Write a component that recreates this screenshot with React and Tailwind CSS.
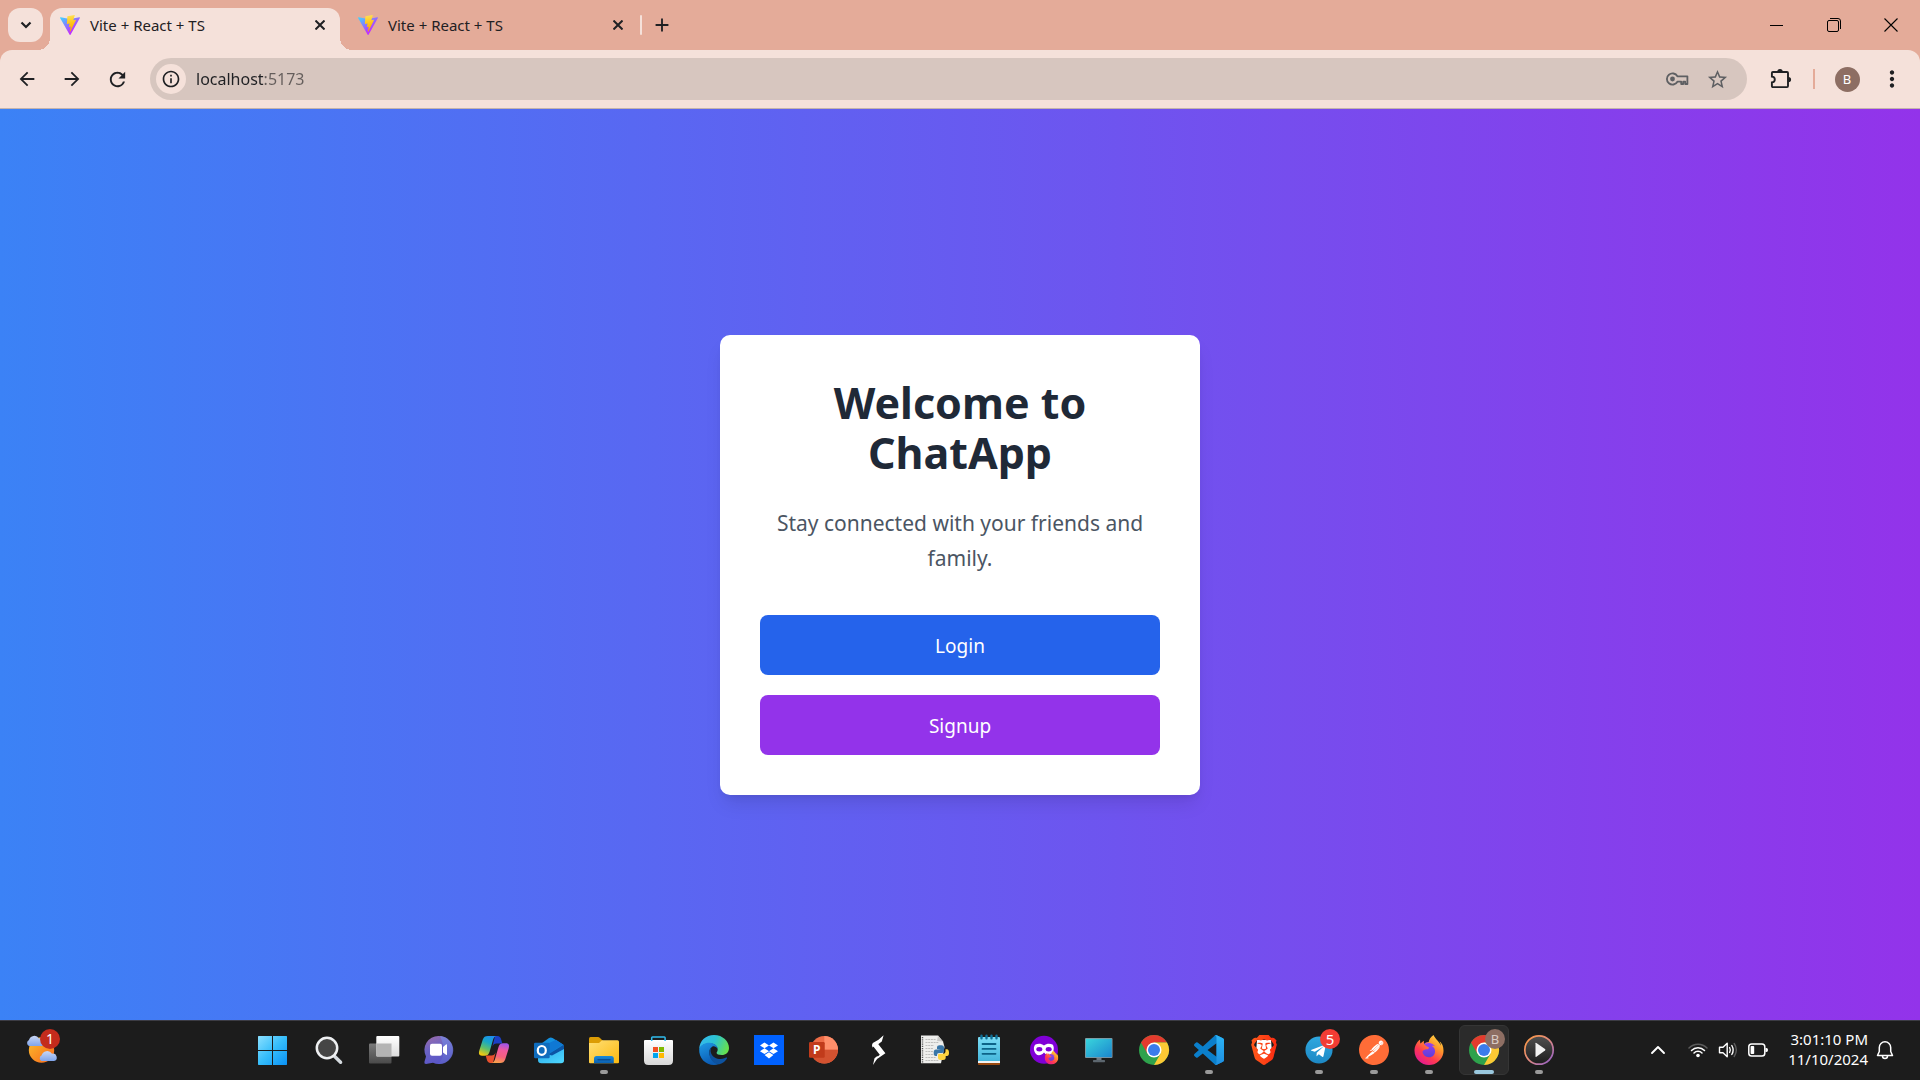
import React from "react";
import { MdArrowBack, MdArrowForward, MdRefresh, MdStarBorder, MdInfoOutline, MdAdd, MdMoreVert } from "react-icons/md";
import { SiBrave, SiPostman, SiFirefoxbrowser } from "react-icons/si";
import { FaTelegram } from "react-icons/fa";

/* ---------- shared gradients ---------- */

function Gradient({ id, stops, x1 = 0, y1 = 0, x2 = 1, y2 = 1 }) {
  return (
    <linearGradient id={id} x1={x1} y1={y1} x2={x2} y2={y2}>
      {stops.map((c, i) => (
        <stop key={i} offset={i / (stops.length - 1)} stopColor={c} />
      ))}
    </linearGradient>
  );
}

function Defs() {
  return (
    <svg width="0" height="0" className="absolute" aria-hidden="true">
      <defs>
        <Gradient id="vite-a" stops={["#41d1ff", "#bd34fe"]} x1={-0.008} y1={0.077} x2={0.576} y2={0.784} />
        <Gradient id="vite-b" stops={["#ffe052", "#ffc61a", "#ffa800"]} x1={0.43} y1={0.02} x2={0.5} y2={0.89} />
        <Gradient id="win" stops={["#8be0ff", "#35bdfb", "#0a91f5"]} />
        <Gradient id="sun" stops={["#fbc02d", "#f8661b"]} />
        <Gradient id="cloud" stops={["#c8d6f5", "#7fa4ea"]} x2={0} />
        <Gradient id="tv-w" stops={["#ffffff", "#dcdcdc"]} x2={0} />
        <Gradient id="tv-g" stops={["#7b7b7b", "#4a4a4a"]} x2={0} />
        <Gradient id="chat" stops={["#a06da8", "#6a62c4", "#5a56c8"]} x2={0.4} />
        <Gradient id="chat2" stops={["#7b88e0", "#5b5fc7"]} x2={0} />
        <Gradient id="cop-a" stops={["#1f8df0", "#16a7c9", "#5fc06a", "#f2c811"]} x1={0.7} x2={0.3} />
        <Gradient id="cop-b" stops={["#f9a14a", "#f4607f", "#f0599c", "#a055e8"]} x1={0.4} y1={1} x2={0.6} y2={0} />
        <Gradient id="folder" stops={["#ffdf75", "#fbb910"]} />
        <Gradient id="clip" stops={["#1a8ad8", "#0a5fb0"]} x2={0} />
        <Gradient id="store" stops={["#ffffff", "#d8d8d8"]} x2={0} />
        <Gradient id="edge-a" stops={["#35b8f0", "#2cc3d2", "#66e04f"]} y1={0.2} y2={0.5} />
        <Gradient id="edge-b" stops={["#1f9be6", "#0b5cb4"]} x2={0.4} />
        <Gradient id="note" stops={["#7bdcf5", "#45b7dc"]} x2={0} />
        <Gradient id="fox" stops={["#ffe14a", "#ff9a2a", "#ff3a50", "#e0159b"]} x1={0.9} y1={0} x2={0.2} y2={1} />
        <Gradient id="foxcore" stops={["#9b3ff0", "#5a3fd8"]} x2={0} />
        <Gradient id="screen" stops={["#39d5dc", "#1b86cf"]} />
        <Gradient id="tele" stops={["#2fa8e0", "#1d88c4"]} x2={0} />
        <Gradient id="brave" stops={["#ff5a1a", "#fb2b12"]} x2={1} y2={0} />
        <Gradient id="media-ring" stops={["#ff9a3d", "#e08a80", "#8a5bd0"]} />
        <Gradient id="media-in" stops={["#505050", "#1c1c1c"]} x2={0} />
        <Gradient id="ol" stops={["#28a8ea", "#50d9ff"]} />
        <Gradient id="vs" stops={["#2bb4f6", "#1f8fe0"]} x2={0} />
      </defs>
    </svg>
  );
}

/* ---------- browser glyphs ---------- */

function ViteLogo() {
  return (
    <svg width="20" height="20" viewBox="0 0 256 257" className="shrink-0" aria-hidden="true">
      <path fill="url(#vite-a)" d="M255.153 37.938L134.897 252.976c-2.483 4.44-8.862 4.466-11.382.048L.875 37.958c-2.746-4.814 1.371-10.646 6.827-9.67l120.385 21.517a6.537 6.537 0 0 0 2.322-.004l117.867-21.483c5.438-.991 9.574 4.796 6.877 9.62Z" />
      <path fill="url(#vite-b)" d="M185.432.063L96.44 17.501a3.268 3.268 0 0 0-2.634 3.014l-5.474 92.456a3.268 3.268 0 0 0 3.997 3.378l24.777-5.718c2.318-.535 4.413 1.507 3.936 3.838l-7.361 36.047c-.495 2.426 1.782 4.5 4.151 3.78l15.304-4.649c2.372-.72 4.652 1.36 4.15 3.788l-11.698 56.621c-.732 3.542 3.979 5.473 5.943 2.437l1.313-2.028l72.516-144.72c1.215-2.423-.88-5.186-3.54-4.672l-25.505 4.922c-2.396.462-4.435-1.77-3.759-4.114l16.646-57.705c.677-2.35-1.37-4.583-3.769-4.113Z" />
    </svg>
  );
}

function CrossIcon() {
  return (
    <svg width="10" height="10" viewBox="0 0 10 10" fill="none" stroke="currentColor" strokeWidth="2" aria-hidden="true">
      <path d="M.5 .5 L9.5 9.5 M9.5 .5 L.5 9.5" />
    </svg>
  );
}

function ChevronDownIcon() {
  return (
    <svg width="12" height="8" viewBox="0 0 12 8" fill="none" stroke="currentColor" strokeWidth="2.2" aria-hidden="true">
      <path d="M1.5 1.5 L6 6 L10.500 1.5" />
    </svg>
  );
}

function KeyIcon() {
  return (
    <svg width="24" height="16" viewBox="0 0 24 16" fill="none" stroke="#5e5f62" strokeWidth="1.8" aria-hidden="true">
      <path d="M12.4 5.3 A5.6 5.6 0 1 0 12.4 10.7 H16.2 V13 H18.2 V10.6 H20.2 V13 H22.4 V5.3 Z" strokeLinejoin="round" />
      <circle cx="7.5" cy="8" r="2.4" fill="#5e5f62" stroke="none" />
    </svg>
  );
}

function PuzzleIcon() {
  return (
    <svg width="22" height="22" viewBox="0 0 22 22" aria-hidden="true">
      <path d="M2.9 4 H17 Q18 4 18 5 V18.1 Q18 19.1 17 19.1 H2.9 Q1.9 19.1 1.9 18.1 V14.4 Q4.8 14.2 4.8 11.5 Q4.8 8.8 1.9 8.6 V5 Q1.9 4 2.9 4 Z" fill="none" stroke="#1f2023" strokeWidth="1.9" />
      <path d="M7.3 3.6 a2.7 2.7 0 0 1 5.4 0 Z M18.4 8.9 a2.7 2.7 0 0 1 0 5.4 Z" fill="#1f2023" />
    </svg>
  );
}

/* ---------- taskbar glyphs, all on a 30 × 30 grid ---------- */

function Glyph({ children }) {
  return (
    <svg width="30" height="30" viewBox="0 0 30 30" className="overflow-visible" aria-hidden="true">
      {children}
    </svg>
  );
}

const Windows = () => (
  <Glyph>
    <path fill="url(#win)" d="M-0.5 1H13V15H-1V1.5ZM14 1H27.500L28 1.500V15H14ZM-1 16H13V30H-0.500L-1 29.500ZM14 16H28V29.500L27.500 30H14Z" />
  </Glyph>
);

const Search = () => (
  <Glyph>
    <path d="M20.500 21.200 L26.600 27.300" stroke="#d5dadf" strokeWidth="3.400" strokeLinecap="round" />
    <circle cx="13" cy="13" r="10.200" fill="#454545" stroke="#eef0f2" strokeWidth="2.500" />
  </Glyph>
);

const TaskView = () => (
  <Glyph>
    <rect x="0" y="8.500" width="22.500" height="20" rx="1" fill="url(#tv-g)" />
    <rect x="7.300" y="1" width="23" height="20.500" rx="1" fill="url(#tv-w)" />
    <path d="M7.300 8.500 H22.500 V21.500 H8.300 Q7.300 21.500 7.300 20.500 Z" fill="#b4b4b4" />
  </Glyph>
);

const Chat = () => (
  <Glyph>
    <path d="M14.500 1 A14 14 0 1 1 9 27.800 L2 29 Q0 29 .4 27 L2 21.500 A14 14 0 0 1 14.500 1Z" fill="url(#chat)" />
    <path d="M16 1 A14 14 0 0 1 14.500 29 Q24 18 16 1Z" fill="url(#chat2)" opacity=".8" />
    <rect x="6" y="8.700" width="12" height="12" rx="2" fill="#fff" />
    <path d="M19 12 L22 9.500 Q23 9 23 10.200 V19.200 Q23 20.400 22 19.800 L19 17.500Z" fill="#fff" />
  </Glyph>
);

const Copilot = () => (
  <Glyph>
    <path d="M16 1 H18.500 C20.500 1 21.600 2.500 22.200 4.500 L23.300 8.500 H17.500 C15.500 8.500 14 9.500 13.300 12 Z" fill="#1b3fc4" />
    <path d="M9 1 H18 C15.500 1 14.500 3 13.800 5.500 L10.500 17 C9.500 20 8 20.700 6 20.700 H3 C0 20.700 -.5 18.500 .3 15.500 L3.800 4.500 C4.700 2 6 1 9 1Z" fill="url(#cop-a)" />
    <g transform="rotate(180 15 14.500)">
      <path d="M16 1 H18.500 C20.500 1 21.600 2.500 22.200 4.500 L23.300 8.500 H17.500 C15.500 8.500 14 9.500 13.300 12 Z" fill="#e8502e" />
    </g>
    <path d="M21 28 H12 C14.500 28 15.500 26 16.200 23.500 L19.500 12 C20.500 9 22 8.300 24 8.300 H27 C30 8.300 30.500 10.500 29.700 13.500 L26.200 24.500 C25.300 27 24 28 21 28Z" fill="url(#cop-b)" />
  </Glyph>
);

const Outlook = () => (
  <Glyph>
    <path d="M4 11 L15 3 Q16.800 1.800 18.600 3 L29 9.500 Q30 10.200 30 11.500 V20 H4Z" fill="#1490df" />
    <path d="M13 9 L22 4.800 L29 9.500 L13 20Z" fill="#0f78d4" />
    <path d="M13 21 L30 10.500 V20 L13 27Z" fill="#0a4fa0" />
    <path d="M4 14 L17 20 L30 13.500 V25.500 Q30 28.300 27 28.300 H7.500 Q4 28.300 4 25Z" fill="url(#ol)" />
    <path d="M14 19.500 L30 9.500 V14 L18 20.500Z" fill="#0c55a5" />
    <rect x="0" y="7.700" width="15.700" height="15.500" rx="1.200" fill="#0f6cbd" />
    <ellipse cx="7.800" cy="15.400" rx="4" ry="4.400" fill="none" stroke="#fff" strokeWidth="2.200" />
  </Glyph>
);

const Explorer = () => (
  <Glyph>
    <path d="M0 3.500 Q0 2 1.500 2 H9 Q10 2 11 3 L13.500 5.500 V10 H0Z" fill="#dc9c05" />
    <path d="M0 8 H10 L13 5.300 H28.500 Q30 5.300 30 6.800 V27.200 Q30 28.300 28.900 28.300 H1.100 Q0 28.300 0 27.200Z" fill="url(#folder)" />
    <path d="M5 28.300 V23.500 Q5 21 7.500 21 H22.300 Q24.800 21 24.800 23.500 V28.300Z" fill="url(#clip)" />
    <path d="M9 24.700 H21" stroke="#0a4f96" strokeWidth="1.400" strokeLinecap="round" />
  </Glyph>
);

const Store = () => (
  <Glyph>
    <path d="M7.700 6 V2.800 Q7.700 2 8.500 2 H20.300 Q21.100 2 21.100 2.800 V6" fill="none" stroke="#30bdee" strokeWidth="1.500" />
    <path d="M1 5 H28 Q29 5 29 6 V25.500 Q29 30 24.500 30 H4.500 Q0 30 0 25.500 V6 Q0 5 1 5Z" fill="url(#store)" />
    <path d="M7.700 5 V6 M21.100 5 V6" stroke="#30bdee" strokeWidth="1.500" />
    <rect x="9" y="12" width="5" height="5" fill="#f25022" />
    <rect x="15" y="12" width="5" height="5" fill="#7fba00" />
    <rect x="9" y="18" width="5" height="5" fill="#00a4ef" />
    <rect x="15" y="18" width="5" height="5" fill="#ffb900" />
  </Glyph>
);

const Edge = () => (
  <Glyph>
    <path d="M.2 14 C.5 5.500 7 0 15 0 C24 0 30 6.500 30 13 C30 17.500 26.700 20 22.800 20 C19.500 20 17.600 19 17.600 18 C17.600 17 18.700 16.600 18.700 14.500 C18.700 11 15 8.200 10.500 8.200 C6 8.200 2 10.500 .2 14Z" fill="url(#edge-a)" />
    <path d="M.2 14 C1.500 10 6 7.600 10.500 7.800 C15 8 18.600 10.500 18.700 14 C17.500 12 15.500 11 13.500 11.500 C10.500 13 9.500 17 11 21 C12.500 25.500 16.500 28.500 20 29 C18.500 29.700 16.800 30 15 30 C6.500 30 -.4 23 .2 14Z" fill="url(#edge-b)" />
    <path d="M13.500 11.500 C11.500 13 11.200 15.500 12 18 C13.500 22 17.500 24 21.500 24 C24.500 24 26.500 22.800 27.300 22.500 C28 22.300 28.300 22.800 28 23.400 C26.500 26 24 28.200 20.500 29.200 C16 29.500 12.500 26 11 22 C9.500 17.500 10.500 13 13.500 11.500Z" fill="#0d529f" />
  </Glyph>
);

const Dropbox = () => (
  <Glyph>
    <rect width="30" height="30" fill="#0061ff" />
    <path fill="#fff" d="M10.500 7.500 L15 10.400 L10.500 13.300 L6 10.400ZM19.500 7.500 L24 10.400 L19.500 13.300 L15 10.400ZM10.500 13.300 L15 16.200 L10.500 19.100 L6 16.200ZM19.500 13.300 L24 16.200 L19.500 19.100 L15 16.200ZM10.600 20.100 L15 17.200 L19.400 20.100 L15 23.500Z" />
  </Glyph>
);

const PowerPoint = () => (
  <Glyph>
    <circle cx="15.300" cy="14.700" r="13.700" fill="#ed6c47" />
    <path d="M15.300 1 A13.700 13.700 0 0 1 29 14.700 H15.300Z" fill="#ff8f6b" />
    <path d="M1.600 14.700 H29 A13.700 13.700 0 0 1 1.600 14.700Z" fill="#d35230" />
    <rect x="0" y="7" width="15.700" height="15.700" rx="1.200" fill="#c13b1b" />
    <text x="7.700" y="19" textAnchor="middle" fontSize="12" fontWeight="700" fill="#fff">P</text>
  </Glyph>
);

const Bolt = () => (
  <Glyph>
    <path fill="#fff" d="M19.600 .3 L17.800 6.500 L13.500 9.800 L12.500 9 L8.500 12.500 Q7.300 9.500 8.800 8 L14.500 4.800Z" />
    <path fill="#fff" d="M8.600 10.500 L13 7.500 L21.400 18.300 L13.800 23.600 L13 22.300 L15.800 19.800Z" />
    <path fill="#fff" d="M9 30 L10.500 23.300 L13.300 21 L14.500 22.500 L12.300 25Z" />
  </Glyph>
);

const PythonFile = () => (
  <Glyph>
    <path d="M2 .5 H19 L24 6.500 L25.500 12 L22 28.300 H2Z" fill="#eeeeec" />
    <path d="M19 .5 L24 6.500 L18 6Z" fill="#c9c9c7" />
    <path d="M3.500 2 V27.500" stroke="#555" strokeWidth="1.400" strokeDasharray="1.200 1" />
    <path d="M6.500 4.500H17M6.500 7.500H20M6.500 10.500H15M6.500 13.500H14M6.500 16.500H14M6.500 19.500H16M6.500 22.500H17M6.500 25.500H20" stroke="#bdbdbb" strokeWidth="1" strokeDasharray="2 .7" />
    <path d="M18 14 V12 Q18 10.300 20.500 10.300 H22.500 Q25 10.300 25 12.500 V16 Q25 18 23 18 H20 Q18 18 18 20 V21 H16.500 Q14.700 21 14.700 17.500 Q14.700 14.500 17 14.500 H22" fill="#3a77a8" />
    <path d="M26.500 14.200 H28 Q30 14.200 30 18 Q30 21 28 21 H22.500 H26.700 V23 Q26.700 25 24 25 H21.500 Q19 25 19 23 V20 Q19 18.800 20.500 18.800 H24 Q26.500 18.800 26.500 16.500Z" fill="#ffd540" />
  </Glyph>
);

const Notepad = () => (
  <Glyph>
    <rect x="4" y="24" width="22" height="6" rx=".8" fill="#99490f" />
    <rect x="4" y="23" width="22" height="5" fill="#f2f2f2" />
    <path d="M5 2 H25 Q26 2 26 3 V26 H4 V3 Q4 2 5 2Z" fill="url(#note)" />
    <path d="M8.500 9H21.500M8.500 13.900H21.500M8.500 18.800H21.500" stroke="#0d6388" strokeWidth="1.800" strokeLinecap="round" />
    <path d="M7.500 .8V3.200M12.500 .8V3.200M17.500 .8V3.200M22.500 .8V3.200" stroke="#0f6f96" strokeWidth="2.400" strokeLinecap="round" />
  </Glyph>
);

const PrivateFox = () => (
  <Glyph>
    <circle cx="15" cy="14.800" r="14" fill="#8000d7" />
    <path d="M15 10.500 C17.500 8.300 21 8.300 23.500 9.500 C25.500 11.500 25 16 23 19 C21 21 17.500 20.500 15 17.500 C12.500 20.500 9 21 7 19 C4.500 16 4.200 11.500 6.500 9.500 C9 8.300 12.500 8.300 15 10.500Z" fill="#fff" />
    <ellipse cx="10.300" cy="14.200" rx="3" ry="2.200" fill="#8000d7" />
    <ellipse cx="19.700" cy="14.200" rx="3" ry="2.200" fill="#8000d7" />
    <circle cx="22.700" cy="22.700" r="4" fill="url(#foxcore)" />
    <SiFirefoxbrowser x="15.500" y="15.500" size={14} fill="url(#fox)" />
  </Glyph>
);

const Monitor = () => (
  <Glyph>
    <path d="M12.500 22 H17.500 V26 H12.500Z" fill="#6f7a83" />
    <rect x="9" y="25" width="12" height="2.200" rx=".6" fill="#5c666e" />
    <rect x="1" y="3" width="27.500" height="20" rx="1" fill="#8a949b" />
    <rect x="1.800" y="3.800" width="26" height="18.400" fill="url(#screen)" />
  </Glyph>
);

const Chrome = () => (
  <Glyph>
    <circle cx="15" cy="15" r="15" fill="#2ea24c" />
    <path d="M2 7.500 A15 15 0 0 1 28 7.500 H15 L8.500 18.750Z" fill="#e33b2e" />
    <path d="M28 7.500 A15 15 0 0 1 15 30 L21.500 18.750 L15 7.500Z" fill="#fcc934" />
    <circle cx="15" cy="15" r="7.500" fill="#fff" />
    <circle cx="15" cy="15" r="6" fill="#3a7cec" />
  </Glyph>
);

const VsCode = () => (
  <Glyph>
    <g transform="scale(1.250)">
      <path d="M23.150 2.587L18.210.210a1.494 1.494 0 0 0-1.705.290l-9.460 8.630-4.120-3.128a.999.999 0 0 0-1.276.057L.327 7.261A1 1 0 0 0 .326 8.740L3.899 12 .326 15.260a1 1 0 0 0 .001 1.479L1.650 17.940a.999.999 0 0 0 1.276.057l4.120-3.128 9.460 8.630a1.492 1.492 0 0 0 1.704.290l4.942-2.377A1.500 1.500 0 0 0 24 20.060V3.939a1.500 1.500 0 0 0-.850-1.352zm-5.146 14.861L10.826 12l7.178-5.448v10.896z" fill="#0b7fcb" />
      <path d="M18.200.200 L23.150 2.587 Q24 3 24 3.940 V20.060 Q24 21 23.150 21.410 L18.200 23.790 Q17.300 24.100 16.500 23.500 Q18 23.700 18 22 V2 Q18 .300 16.500 .500 Q17.300 -.100 18.200 .200Z" fill="url(#vs)" />
    </g>
  </Glyph>
);

const Brave = () => (
  <Glyph>
    <path d="M8 5 H22 L23 18 L15 27 L7 18Z" fill="#fff" />
    <SiBrave x="0" y="0" size={30} fill="url(#brave)" />
  </Glyph>
);

const Telegram = () => (
  <Glyph>
    <circle cx="14.800" cy="14.800" r="12" fill="#fff" />
    <FaTelegram x="1" y="1" size={28} fill="url(#tele)" />
  </Glyph>
);

const Postman = () => (
  <Glyph>
    <circle cx="15" cy="15" r="14" fill="#fff" />
    <SiPostman x="0" y="0" size={30} fill="#ff6c37" />
  </Glyph>
);

const Firefox = () => (
  <Glyph>
    <circle cx="15" cy="15" r="8" fill="url(#foxcore)" />
    <SiFirefoxbrowser x="0" y="0" size={30} fill="url(#fox)" />
  </Glyph>
);

const Media = () => (
  <Glyph>
    <circle cx="15" cy="15" r="14.200" fill="url(#media-in)" stroke="url(#media-ring)" strokeWidth="1.700" />
    <path d="M11.500 8.300 Q11.500 7.300 12.400 7.900 L21 14 Q21.900 14.800 21 15.600 L12.400 21.700 Q11.500 22.200 11.500 21.300Z" fill="#f1f1f1" />
  </Glyph>
);

const Weather = () => (
  <svg width="32" height="32" viewBox="0 0 32 32" className="overflow-visible" aria-hidden="true">
    <circle cx="15.500" cy="16" r="12.700" fill="url(#sun)" />
    <path d="M3 12 A3.300 3.300 0 0 1 3 6 A5.500 5.500 0 0 1 13 4.500 A4 4 0 0 1 16 12Z" fill="url(#cloud)" />
    <path d="M15.500 27 A3 3 0 0 1 15.500 21.500 A5.800 5.800 0 0 1 26 19.800 A3.700 3.700 0 0 1 28 27Z" fill="url(#cloud)" />
  </svg>
);

/* ---------- taskbar ---------- */

const apps = [
  { name: "Start", Icon: Windows },
  { name: "Search", Icon: Search },
  { name: "Task view", Icon: TaskView },
  { name: "Chat", Icon: Chat },
  { name: "Copilot", Icon: Copilot },
  { name: "Outlook", Icon: Outlook },
  { name: "File Explorer", Icon: Explorer, open: true },
  { name: "Microsoft Store", Icon: Store },
  { name: "Edge", Icon: Edge },
  { name: "Dropbox", Icon: Dropbox },
  { name: "PowerPoint", Icon: PowerPoint },
  { name: "Launcher", Icon: Bolt },
  { name: "Python", Icon: PythonFile },
  { name: "Notepad", Icon: Notepad },
  { name: "Private browsing", Icon: PrivateFox },
  { name: "Remote desktop", Icon: Monitor },
  { name: "Chrome", Icon: Chrome },
  { name: "Visual Studio Code", Icon: VsCode, open: true },
  { name: "Brave", Icon: Brave },
  { name: "Telegram", Icon: Telegram, open: true, badge: "5", badgeClass: "bg-[#f23c34] text-[15px] text-white" },
  { name: "Postman", Icon: Postman, open: true },
  { name: "Firefox", Icon: Firefox, open: true },
  { name: "Chrome profile", Icon: Chrome, active: true, badge: "B", badgeClass: "bg-[#8d6e63] text-[13px] text-[#d9cbc6]" },
  { name: "Media Player", Icon: Media, open: true },
];

function TaskbarApp({ app }) {
  const { name, Icon, open, active, badge, badgeClass } = app;
  return (
    <li className="flex w-[54px] justify-center">
      <button
        type="button"
        aria-label={name}
        className={
          "relative flex h-[50px] w-[50px] items-center justify-center rounded-md border " +
          (active ? "border-[#353535] bg-[#2b2b2b]" : "border-transparent")
        }
      >
        <Icon />
        {badge && (
          <span className={"absolute top-[3px] right-[3px] flex size-5 items-center justify-center rounded-full leading-none " + badgeClass}>
            {badge}
          </span>
        )}
        {open && <span className="absolute bottom-0 h-1 w-2 rounded-full bg-[#9a9a9a]" />}
        {active && <span className="absolute bottom-0 h-1 w-5 rounded-full bg-[#9ac8de]" />}
      </button>
    </li>
  );
}

function Tray() {
  return (
    <div className="ml-auto flex items-center pr-[26px] text-white">
      <button type="button" aria-label="Show hidden icons" className="mr-5 flex size-5 items-center justify-center">
        <svg width="16" height="10" viewBox="0 0 16 10" fill="none" stroke="currentColor" strokeWidth="1.900" strokeLinecap="round" strokeLinejoin="round">
          <path d="M2 8 L8 2 L14 8" />
        </svg>
      </button>
      <button type="button" aria-label="Network, volume and battery" className="mr-5 flex items-center gap-2.5">
        <svg width="20" height="16" viewBox="0 0 20 16" fill="none" strokeWidth="1.500" strokeLinecap="round">
          <path d="M1 6 A12.500 12.500 0 0 1 19 6" stroke="#5c5c5c" />
          <path d="M3.500 8.500 A9 9 0 0 1 16.500 8.500 M6 11 A5.600 5.600 0 0 1 14 11" stroke="#fff" />
          <circle cx="10" cy="13.500" r="1.800" fill="#fff" />
        </svg>
        <svg width="20" height="18" viewBox="0 0 20 18" fill="none" strokeWidth="1.400" strokeLinecap="round" strokeLinejoin="round">
          <path d="M1.500 6.200 H5 L9.200 2.200 V15.800 L5 11.800 H1.500Z" stroke="#fff" />
          <path d="M11.600 6.500 Q13 9 11.600 11.500 M13.800 4.500 Q16.500 9 13.800 13.500" stroke="#fff" />
          <path d="M16.200 2.500 Q20.500 9 16.200 15.500" stroke="#5c5c5c" />
        </svg>
        <svg width="20" height="14" viewBox="0 0 20 14">
          <rect x=".8" y="1" width="16" height="12" rx="2.800" fill="none" stroke="#fff" strokeWidth="1.500" />
          <rect x="2.600" y="3" width="3.600" height="8" rx=".8" fill="#fff" />
          <path d="M17.500 5 H18.400 Q20 5 20 7 Q20 9 18.400 9 H17.500Z" fill="#fff" />
        </svg>
      </button>
      <button type="button" className="pb-0.5 text-right text-[15px] leading-5">
        3:01:10 PM
        <br />
        11/10/2024
      </button>
      <button type="button" aria-label="Notifications" className="ml-2">
        <svg width="18" height="20" viewBox="0 0 18 20" fill="none" stroke="currentColor" strokeWidth="1.500" strokeLinejoin="round">
          <path d="M1.500 15.500 L3.300 11.500 V7.500 A5.700 5.700 0 0 1 14.700 7.500 V11.500 L16.500 15.500Z" />
          <path d="M6.500 16 A2.500 2.500 0 0 0 11.500 16" />
        </svg>
      </button>
    </div>
  );
}

function Taskbar() {
  return (
    <footer className="flex h-[60px] shrink-0 items-center border-t border-[#3c3c44] bg-[#1c1c1c] pb-px">
      <div className="w-[247px] shrink-0 pl-[26px]">
        <button type="button" aria-label="Weather" className="relative flex">
          <Weather />
          <span className="absolute -top-[5px] left-3.5 flex size-5 items-center justify-center rounded-full bg-[#c42b1c] text-[14px] leading-none text-white">
            1
          </span>
        </button>
      </div>
      <ul className="flex gap-px">
        {apps.map((app) => (
          <TaskbarApp key={app.name} app={app} />
        ))}
      </ul>
      <Tray />
    </footer>
  );
}

/* ---------- browser window ---------- */

function Tab({ title, active }) {
  return (
    <div className={"relative flex h-[42px] w-[290px] items-center gap-2.5 rounded-t-xl pr-2 pb-2 pl-2.5 " + (active ? "bg-[#f5e1da]" : "")}>
      {active && (
        <>
          <span className="absolute bottom-0 -left-3 size-3 bg-[radial-gradient(circle_at_0_0,transparent_12px,#f5e1da_12px)]" />
          <span className="absolute -right-3 bottom-0 size-3 bg-[radial-gradient(circle_at_100%_0,transparent_12px,#f5e1da_12px)]" />
        </>
      )}
      <ViteLogo />
      <button type="button" role="tab" aria-selected={active} className="flex-1 text-left text-[15px] leading-5">
        {title}
      </button>
      <button type="button" aria-label="Close tab" className="flex size-6 items-center justify-center">
        <CrossIcon />
      </button>
    </div>
  );
}

function TabStrip() {
  return (
    <div className="flex h-[50px] items-end bg-[#e4ab99]">
      <button type="button" aria-label="Search tabs" className="mr-[7px] mb-2 ml-2 flex h-[34px] w-[35px] items-center justify-center rounded-xl bg-[#f5e1da]">
        <ChevronDownIcon />
      </button>
      <div role="tablist" className="flex gap-2">
        <Tab title="Vite + React + TS" active />
        <Tab title="Vite + React + TS" active={false} />
      </div>
      <div className="flex h-[50px] items-center pl-0.5">
        <span className="h-5 w-0.5 rounded-full bg-[#f5e1da]" />
        <button type="button" aria-label="New tab" className="ml-1.5 flex size-7 items-center justify-center">
          <MdAdd size={22} />
        </button>
      </div>
      <div className="mr-px ml-auto flex h-[50px] text-black">
        <button type="button" aria-label="Minimize" className="flex w-[57px] items-center justify-center">
          <span className="h-px w-[13px] bg-black" />
        </button>
        <button type="button" aria-label="Restore" className="flex w-[57px] items-center justify-center">
          <svg width="14" height="14" viewBox="0 0 14 14" fill="none" stroke="#000" strokeWidth="1">
            <rect x=".5" y="2.500" width="11" height="11" rx="1.500" />
            <path d="M3 .5 H11 Q13.500 .5 13.500 3 V11" />
          </svg>
        </button>
        <button type="button" aria-label="Close" className="flex w-[57px] items-center justify-center">
          <svg width="14" height="14" viewBox="0 0 14 14" stroke="#000" strokeWidth="1.100">
            <path d="M.5 .5 L13.500 13.500 M13.500 .5 L.5 13.500" />
          </svg>
        </button>
      </div>
    </div>
  );
}

function Toolbar() {
  const nav = "flex size-9 items-center justify-center";
  return (
    <div className="bg-[#e4ab99]">
      <div className="flex h-[59px] items-center rounded-t-xl border-b border-[#c4b3ad] bg-[#f5e1da] pr-2.5 pl-[9px]">
        <div className="flex gap-[9px]">
          <button type="button" aria-label="Back" className={nav}><MdArrowBack size={22} /></button>
          <button type="button" aria-label="Forward" className={nav}><MdArrowForward size={22} /></button>
          <button type="button" aria-label="Reload" className={nav}><MdRefresh size={23} /></button>
        </div>
        <div className="ml-[15px] flex h-[42px] flex-1 items-center rounded-full bg-[#d7c6bf] pr-[18px] pl-1.5">
          <button type="button" aria-label="View site information" className="flex size-[30px] shrink-0 items-center justify-center rounded-full bg-[#f5e1da]">
            <MdInfoOutline size={20} />
          </button>
          <input
            type="text"
            aria-label="Address"
            defaultValue="localhost:5173"
            className="ml-2.5 min-w-0 flex-1 bg-[linear-gradient(to_right,#1f2023_68px,#645d5b_68px)] bg-clip-text text-[16px] leading-6 text-transparent outline-none"
          />
          <button type="button" aria-label="Passwords" className="mr-[17px]"><KeyIcon /></button>
          <button type="button" aria-label="Bookmark this tab" className="text-[#5e5f62]"><MdStarBorder size={23} /></button>
        </div>
        <button type="button" aria-label="Extensions" className={"ml-4 " + nav}><PuzzleIcon /></button>
        <span className="mx-3.5 h-5 w-0.5 bg-[#e4ab99]" />
        <button type="button" aria-label="Profile" className={nav}>
          <span className="flex size-[25px] items-center justify-center rounded-full bg-[#8d6e63] text-[13px] leading-none text-white">B</span>
        </button>
        <button type="button" aria-label="Menu" className={"ml-[9px] " + nav}><MdMoreVert size={26} /></button>
      </div>
    </div>
  );
}

function Welcome() {
  const action = "h-[60px] w-full rounded-lg pt-1 text-[19px] text-white";
  return (
    <main className="flex flex-1 items-center justify-center bg-[linear-gradient(to_right,#3b82f6,#9333ea)]">
      <section className="w-[480px] rounded-[10px] bg-white px-10 pt-[43px] pb-10 text-center shadow-[0_12px_19px_-4px_rgba(0,0,0,0.1),0_5px_8px_-5px_rgba(0,0,0,0.1)]">
        <h1 className="mb-7 text-[43px] leading-[50px] font-bold text-[#1f2937]">Welcome to ChatApp</h1>
        <p className="mb-[39px] text-[21px] leading-[35px] text-[#4b5563]">Stay connected with your friends and family.</p>
        <div className="flex flex-col gap-5">
          <button type="button" className={action + " bg-[#2563eb]"}>Login</button>
          <button type="button" className={action + " bg-[#9333ea]"}>Signup</button>
        </div>
      </section>
    </main>
  );
}

export default function App() {
  return (
    <div className="flex min-h-screen flex-col font-['Noto_Sans',sans-serif] text-[#1f2023]">
      <Defs />
      <header>
        <TabStrip />
        <Toolbar />
      </header>
      <Welcome />
      <Taskbar />
    </div>
  );
}
